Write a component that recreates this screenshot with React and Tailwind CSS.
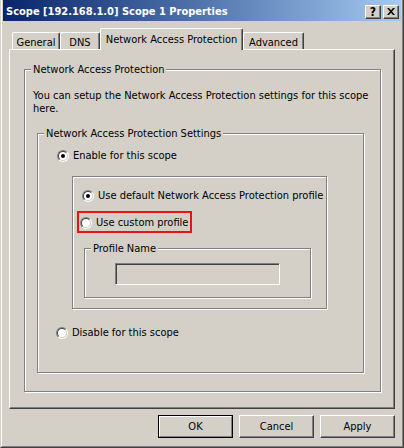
import React from "react";

function Radio({ checked }) {
  return (
    <span className="inline-block w-[12px] h-[12px] shrink-0 rounded-full border border-t-[#808080] border-l-[#808080] border-r-white border-b-white">
      <span className="flex items-center justify-center w-full h-full rounded-full border border-t-[#404040] border-l-[#404040] border-r-[#d4d0c8] border-b-[#d4d0c8] bg-white">
        {checked && <span className="w-[4px] h-[4px] rounded-full bg-black" />}
      </span>
    </span>
  );
}

function RadioRow({ checked, children, className = "" }) {
  return (
    <div className={"flex items-center gap-[4px] h-[13px] " + className}>
      <Radio checked={checked} />
      <span className="whitespace-nowrap">{children}</span>
    </div>
  );
}

function Group({ label, className = "", children }) {
  return (
    <div className={"relative border border-[#808080] shadow-[inset_1px_1px_0_#ffffff,1px_1px_0_#ffffff] " + className}>
      {label && (
        <span className="absolute left-[6px] top-[-7px] px-[2px] bg-[#d4d0c8] leading-[13px] whitespace-nowrap">
          {label}
        </span>
      )}
      {children}
    </div>
  );
}

function Button({ children, isDefault }) {
  const inner = (
    <div className="w-full h-full flex items-center justify-center border border-t-white border-l-white border-r-[#404040] border-b-[#404040] shadow-[inset_-1px_-1px_0_#808080]">
      {children}
    </div>
  );
  if (isDefault) {
    return (
      <div className="w-[75px] h-[23px] border border-black">
        <div className="w-full h-full flex items-center justify-center border border-t-white border-l-white border-r-[#808080] border-b-[#808080]">
          {children}
        </div>
      </div>
    );
  }
  return <div className="w-[75px] h-[23px]">{inner}</div>;
}

function Tab({ children, selected, className = "" }) {
  if (selected) {
    return (
      <div className={"relative z-10 h-[22px] -mb-[1px] flex items-start justify-center pt-[4px] bg-[#d4d0c8] border-l border-t border-r border-l-white border-t-white border-r-[#404040] rounded-t-[2px] shadow-[inset_-1px_0_0_#808080] " + className}>
        {children}
      </div>
    );
  }
  return (
    <div className={"mt-[4px] h-[17px] flex items-start justify-center pt-[3px] bg-[#d4d0c8] border-l border-t border-r border-l-white border-t-white border-r-[#404040] rounded-t-[2px] shadow-[inset_-1px_0_0_#808080] " + className}>
      {children}
    </div>
  );
}

export default function App() {
  return (
    <div className="w-[404px] h-[448px] bg-[#d4d0c8] border-l border-r border-b border-l-[#d4d0c8] border-r-[#404040] border-b-[#404040] text-[11px] leading-[13px] text-black font-['DejaVu_Sans_Condensed','Liberation_Sans',sans-serif]">
      <div className="h-full border-l border-r border-b border-l-white border-r-[#808080] border-b-[#808080] px-[1px] flex flex-col">
        {/* Title bar */}
        <div className="h-[21px] flex items-center bg-linear-to-r from-[#0a246a] to-[#a6caf0] pl-[3px] pr-[2px]">
          <span className="text-white font-bold flex-1 whitespace-nowrap pt-[2px]">
            Scope [192.168.1.0] Scope 1 Properties
          </span>
          <div className="flex gap-[2px] pt-[2px]">
            <div className="w-[16px] h-[14px] bg-[#d4d0c8] border border-t-white border-l-white border-r-[#404040] border-b-[#404040] shadow-[inset_-1px_-1px_0_#808080] flex items-center justify-center font-bold text-[12px] leading-[12px]">
              ?
            </div>
            <div className="w-[16px] h-[14px] bg-[#d4d0c8] border border-t-white border-l-white border-r-[#404040] border-b-[#404040] shadow-[inset_-1px_-1px_0_#808080] flex items-center justify-center">
              <svg width="8" height="7" viewBox="0 0 8 7">
                <path d="M0 0h2l2 2.2L6 0h2L5 3.5 8 7H6L4 4.8 2 7H0l3-3.5z" fill="#000" />
              </svg>
            </div>
          </div>
        </div>

        {/* Body */}
        <div className="px-[6px] pt-[7px] flex flex-col">
          {/* Tabs */}
          <div className="h-[21px] flex items-start pl-[3px]">
            <Tab className="w-[48px]">General</Tab>
            <Tab className="w-[40px]">DNS</Tab>
            <Tab selected className="w-[143px]">Network Access Protection</Tab>
            <Tab className="w-[61px]">Advanced</Tab>
          </div>

          {/* Panel */}
          <div className="h-[360px] border border-l-white border-t-white border-r-[#404040] border-b-[#404040] shadow-[inset_-1px_-1px_0_#808080] pt-[19px] pl-[14px]">
            <Group label="Network Access Protection" className="w-[357px] h-[323px] pt-[19px] pl-[8px]">
              <p>
                You can setup the Network Access Protection settings for this scope
                <br />
                here.
              </p>
              <Group label="Network Access Protection Settings" className="mt-[18px] ml-[4px] w-[327px] h-[240px] pt-[15px] pl-[19px]">
                <RadioRow checked>Enable for this scope</RadioRow>
                <Group className="mt-[14px] ml-[15px] w-[255px] h-[133px] pt-[12px] pl-[9px]">
                  <RadioRow checked>Use default Network Access Protection profile</RadioRow>
                  <div className="mt-[9px] ml-[-5px] w-[115px] h-[22px] border-2 border-[#ee1111] pt-[3px] pl-[1px]">
                    <RadioRow>Use custom profile</RadioRow>
                  </div>
                  <Group label="Profile Name" className="mt-[15px] ml-[2px] w-[227px] h-[50px] pt-[14px] pl-[30px]">
                    <div className="w-[165px] h-[22px] bg-[#d4d0c8] border border-t-[#808080] border-l-[#808080] border-r-white border-b-white shadow-[inset_1px_1px_0_#404040,inset_-1px_-1px_0_#d4d0c8]" />
                  </Group>
                </Group>
                <RadioRow className="mt-[17px] ml-[-1px]">Disable for this scope</RadioRow>
              </Group>
            </Group>
          </div>

          {/* Buttons */}
          <div className="mt-[6px] flex justify-end gap-[6px]">
            <Button isDefault>OK</Button>
            <Button>Cancel</Button>
            <Button>Apply</Button>
          </div>
        </div>
      </div>
    </div>
  );
}
